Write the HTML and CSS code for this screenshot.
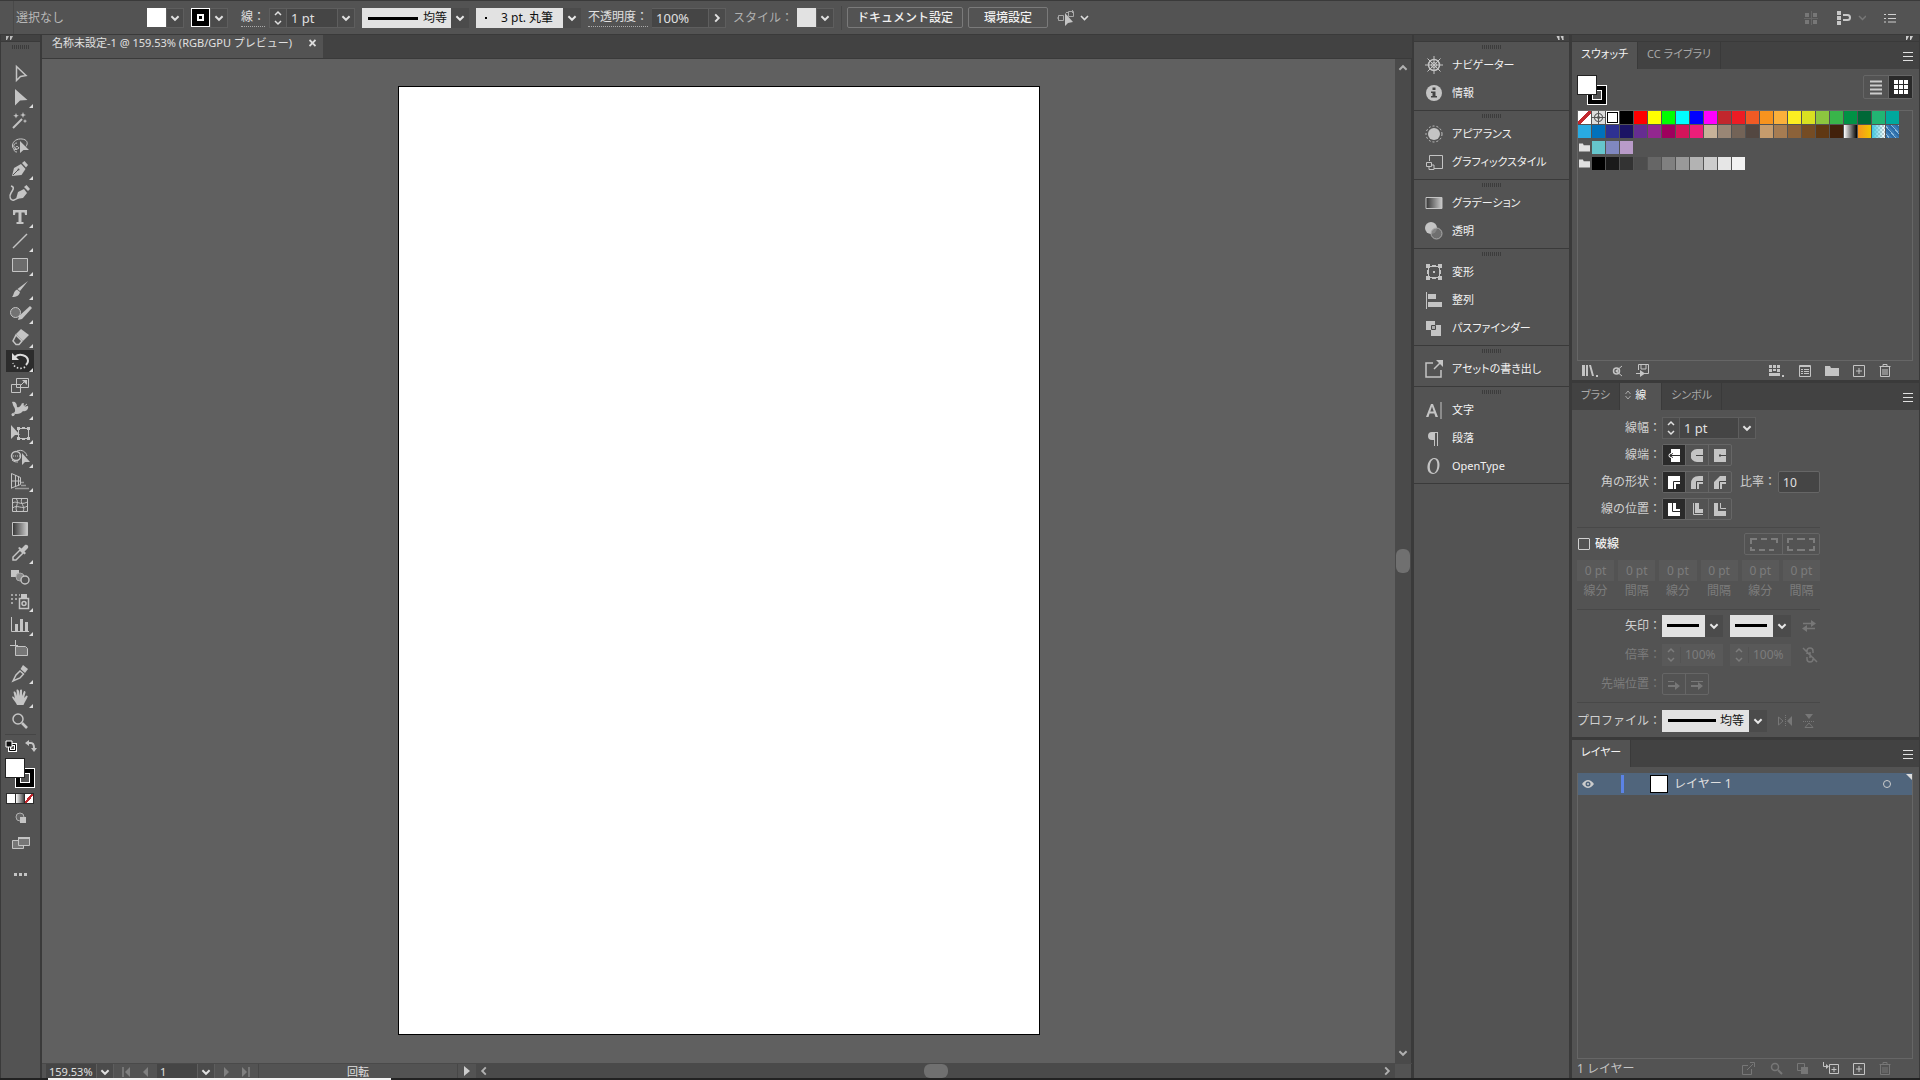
FILE: index.html
```html
<!DOCTYPE html>
<html lang="ja">

<head>
  <meta charset="utf-8">
  <title>名称未設定-1</title>
  <link rel="stylesheet" href="styles.css">
</head>

<body>
  <!-- Shared icons -->
  <svg class="sprite" aria-hidden="true">
    <symbol id="chev" viewBox="0 0 10 10"><path d="M2 3.5l3 3 3-3" fill="none" stroke="currentColor" stroke-width="1.6"/></symbol>
    <symbol id="steps" viewBox="0 0 10 18"><path d="M2 6l3-3 3 3M2 12l3 3 3-3" fill="none" stroke="currentColor" stroke-width="1.5"/></symbol>
    <symbol id="menu" viewBox="0 0 10 10"><path d="M0 1.5h10M0 5.5h10M0 9.5h10" stroke="currentColor" fill="none"/></symbol>
    <symbol id="folder" viewBox="0 0 14 12"><path d="M0 11V1h5l1 2h8v8z" fill="currentColor"/></symbol>
    <symbol id="plus" viewBox="0 0 12 12"><path d="M.5.5h11v11H.5zM6 3v6M3 6h6" fill="none" stroke="currentColor"/></symbol>
    <symbol id="trash" viewBox="0 0 12 13"><path d="M.5 2.5h11M4 2V.5h4V2M1.5 3v9.5h9V3M4 5v6M6 5v6M8 5v6" fill="none" stroke="currentColor"/></symbol>
    <symbol id="swap" viewBox="0 0 14 12"><path d="M1 3.5h9M4 8.5h9" stroke="currentColor" stroke-width="1.4"/><path d="M9 0l5 3.5L9 7zM5 5L0 8.5 5 12z" fill="currentColor"/></symbol>
  </svg>

  <header class="control-bar">
    <span class="bar-grip"></span>
    <span class="selection">選択なし</span>
    <div class="combo">
      <span class="chip chip-fill"></span>
      <button class="drop" aria-label="塗り"><svg><use href="#chev"/></svg></button>
    </div>
    <div class="combo">
      <span class="chip chip-stroke"></span>
      <button class="drop" aria-label="線カラー"><svg><use href="#chev"/></svg></button>
    </div>
    <label class="dotted weight-label" for="weight">線：</label>
    <div class="combo field">
      <button class="drop" aria-label="線幅を増減"><svg class="steps"><use href="#steps"/></svg></button>
      <input id="weight" class="weight" type="text" value="1 pt">
      <button class="drop" aria-label="線幅"><svg><use href="#chev"/></svg></button>
    </div>
    <div class="picker profile-top">
      <select aria-label="可変線幅プロファイル"><option>均等</option></select>
      <svg><use href="#chev"/></svg>
    </div>
    <div class="picker brush-top">
      <select aria-label="ブラシ定義"><option>3 pt. 丸筆</option></select>
      <svg><use href="#chev"/></svg>
    </div>
    <label class="dotted" for="opacity">不透明度：</label>
    <div class="combo field">
      <input id="opacity" class="opacity" type="text" value="100%">
      <button class="drop" aria-label="不透明度"><svg class="turn"><use href="#chev"/></svg></button>
    </div>
    <span class="muted">スタイル：</span>
    <div class="combo">
      <span class="chip chip-style"></span>
      <button class="drop" aria-label="スタイル"><svg><use href="#chev"/></svg></button>
    </div>
    <span class="rule"></span>
    <button class="text-btn">ドキュメント設定</button>
    <button class="text-btn prefs">環境設定</button>
    <button class="icon-btn similar" aria-label="共通オブジェクトを選択">
      <svg width="32" height="18" viewBox="0 0 32 18"><path d="M1.5 6.5h5v5h-5zM11.500 2.500h5v5h-5zM0 9h2M9 3.500h3M15.500 1v3" fill="none" stroke="#a8a8a8"/><path d="M8 4v13l3-3 5-1z" fill="#c4c4c4"/><path d="M24 7l3.500 3.500L31 7" fill="none" stroke="#ddd" stroke-width="1.600"/></svg>
    </button>
    <span class="spacer"></span>
    <button class="icon-btn" aria-label="グリッド" disabled><svg width="14" height="14"><path d="M1 2h4v4H1zM9 2h4v4H9zM1 9h4v4H1zM9 9h4v4H9z" fill="#777"/><path d="M7.500 0v14M0 7.500h14" stroke="#666" /></svg></button>
    <button class="icon-btn snap" aria-label="整列"><svg width="30" height="16"><path d="M1 1h4v4H1zM1 6h4v4H1zM1 11h4v4H1z" fill="#c8c8c8"/><path d="M7 5h4.500a2.500 2.500 0 010 5H7" fill="none" stroke="#c8c8c8" stroke-width="2"/><path d="M23 6l3.500 3.500L30 6" fill="none" stroke="#777" stroke-width="1.500"/></svg></button>
    <button class="icon-btn" aria-label="メニュー"><svg width="12" height="10"><path d="M0 1.500h2M0 5.500h2M0 9h2M4 1.500h8M4 5.500h8M4 9h8" stroke="#d0d0d0"/></svg></button>
  </header>

  <main class="workspace">
    <nav class="tools" aria-label="ツール">
      <div class="strip-head"><svg width="8" height="4"><path d="M0 0h3L1 4H0zM4 0h3L5 4H4z" fill="#bbb"/></svg></div>
      <div class="grip"></div>
      <div class="tool-list">
        <button class="tool" aria-label="選択"><svg viewBox="0 0 30 24"><path class="ln" d="M11.500 5.500v14l4-4 5.500-1z"/></svg></button>
        <button class="tool more" aria-label="ダイレクト選択"><svg viewBox="0 0 30 24"><path d="M10 4v16.500l5-5L22.500 15z"/></svg></button>
        <button class="tool" aria-label="自動選択"><svg viewBox="0 0 30 24"><path d="M8 19L17 10" stroke="#c4c4c4" stroke-width="2"/><path d="M11 4l.8 2 2 .8-2 .8-.8 2-.8-2-2-.8 2-.8zM18 3l.8 2.200 2.200.8-2.200.8L18 9l-.8-2.200L15 6l2.200-.8zM20 10l.6 1.500 1.500.6-1.500.6-.6 1.500-.6-1.500-1.500-.6 1.500-.6z"/></svg></button>
        <button class="tool" aria-label="なげなわ"><svg viewBox="0 0 30 24"><path class="th" d="M12 16.500c-3 .5-5-1.500-4.500-4.500C8 8 12 5.500 17 6s6.500 4 4 7.500M12 10a3 3 0 102 5c-1-2-3-2-3.500-.5M9 16c0 2 1 3 3 3"/><path d="M15 8v12l3.500-3H24z"/></svg></button>
        <button class="tool more" aria-label="ペン"><svg viewBox="0 0 30 24"><path d="M7 19l2-8 7-4 4.500 5-4 6z"/><path d="M17 6l2.500-2 3.500 4-2 2.500z"/><path d="M8 18l5-5" stroke="#535353"/><circle cx="13.500" cy="12.500" r="1" fill="#535353"/></svg></button>
        <button class="tool" aria-label="曲線"><svg viewBox="0 0 30 24"><path d="M11 18l2-7 6-3 3 4-4 5zM19 6l2.500-2 3.500 4-2 2z"/><path class="ln" d="M6 5c4 1 2 4 0 7s-1 8 3 7 5-3 7-5"/></svg></button>
        <button class="tool more" aria-label="文字"><svg viewBox="0 0 30 24"><path d="M8 5h14v5h-2l-.5-2.500h-3V17h2v2h-7v-2h2V7.500h-3L10 10H8z"/></svg></button>
        <button class="tool more" aria-label="直線"><svg viewBox="0 0 30 24"><path class="ln" d="M8 19L22 5"/></svg></button>
        <button class="tool more" aria-label="長方形"><svg viewBox="0 0 30 24"><path d="M7.500 5.500h15v13h-15z" fill="#6c6c6c" stroke="#c4c4c4"/></svg></button>
        <button class="tool more" aria-label="ブラシ"><svg viewBox="0 0 30 24"><path d="M23 4l-8 10-2.500-2zM12 12.500l3 2.500c-.5 3-3 5-8 5 2-2 1.500-6 5-7.500z"/></svg></button>
        <button class="tool more" aria-label="Shaper"><svg viewBox="0 0 30 24"><circle cx="10.500" cy="11.500" r="5" fill="#737373" stroke="#c4c4c4"/><path d="M25 5l2 2-10 11-4 1 1-4z"/></svg></button>
        <button class="tool more" aria-label="消しゴム"><svg viewBox="0 0 30 24"><path d="M16 4l8 6-6 6-7-7z"/><path class="ln" d="M11 10l6 6-3 3.500H11l-3-3.500z"/></svg></button>
        <button class="tool more current" aria-label="回転"><svg viewBox="0 0 30 24"><path d="M10 8c4-4 13-2 13 4 0 2-1 3-2 4" fill="none" stroke="#ddd" stroke-width="2"/><path d="M7 4v7h7z" fill="#ddd"/><path d="M20 18c-4 3-11 1-12-4" fill="none" stroke="#ddd" stroke-width="1.600" stroke-dasharray="1.500 2"/></svg></button>
        <button class="tool more" aria-label="拡大・縮小"><svg viewBox="0 0 30 24"><path class="th" d="M11.500 5.500h12v9h-12zM6.500 11.500h9v8h-9zM16 12l4-4"/><path d="M17 7h5v5z"/></svg></button>
        <button class="tool more" aria-label="線幅"><svg viewBox="0 0 30 24"><path d="M7 5c3-1 5 1 5 5 2 1 4-1 5-4 1 1 2 0 2 0-1 3 0 4 4 3 1 3-2 6-5 5-2 3-7 4-10 2 2 0 3-3 1-6-1-1-1-3-2-5z"/><path class="th" d="M7 19l15-12"/><circle cx="8" cy="17.500" r="1.500"/></svg></button>
        <button class="tool more" aria-label="自由変形"><svg viewBox="0 0 30 24"><path d="M6 4v14l4-4h5z"/><path class="th" d="M13.500 7.500h10v10h-10z"/><path d="M12 6h3v3h-3zM22 6h3v3h-3zM12 16h3v3h-3zM22 16h3v3h-3zM17 6h3v2h-3zM17 17h3v2h-3z"/></svg></button>
        <button class="tool more" aria-label="シェイプ形成"><svg viewBox="0 0 30 24"><circle class="ln" cx="11" cy="11" r="4.500"/><path class="th" d="M12 6c5-2 9 1 10 5M13 17c-2 0-4 0-6-2"/><path d="M8 11h8" stroke="#c4c4c4" stroke-dasharray="1 1"/><path d="M17 8v12l3-3h5z"/></svg></button>
        <button class="tool more" aria-label="遠近グリッド"><svg viewBox="0 0 30 24"><path class="th" d="M6.500 4.500v15M6.500 4.500l9 4v7l-9 3.500M10.500 6v12M13.500 7.500v9M6.500 12h9"/><path d="M16 13.500h3M16 16.500h5M10 19.500h14" stroke="#999" stroke-width="1.500"/></svg></button>
        <button class="tool" aria-label="メッシュ"><svg viewBox="0 0 30 24"><path class="th" d="M7.500 5.500h15v13h-15zM7.500 10c5-3 7 3 15-1M7.500 15c5-4 9 2 15-2M11 5.500c4 4-2 9 1 13M17 5.500c-3 4 4 8 1 13"/></svg></button>
        <button class="tool" aria-label="グラデーション"><svg viewBox="0 0 30 24"><defs><linearGradient id="gr"><stop stop-color="#333"/><stop offset="1" stop-color="#ccc"/></linearGradient></defs><path d="M7.500 5.500h15v13h-15z" fill="url(#gr)" stroke="#c4c4c4"/></svg></button>
        <button class="tool more" aria-label="スポイト"><svg viewBox="0 0 30 24"><path class="ln" d="M15 9l3 3-7 7H8v-3z"/><path d="M13 7l1.500-1 2 1.500L20 4c2-1 4 1 3 3l-3.500 3.500L21 12l-1.500 1.500z"/></svg></button>
        <button class="tool" aria-label="ブレンド"><svg viewBox="0 0 30 24"><path d="M6 5h8v7H6z"/><circle cx="15" cy="12" r="4" fill="#888" stroke="#aaa"/><circle cx="20" cy="15" r="4" fill="#535353" stroke="#c4c4c4" stroke-width="1.400"/></svg></button>
        <button class="tool more" aria-label="シンボルスプレー"><svg viewBox="0 0 30 24"><path class="ln" d="M14.500 9.500h9v10h-9z"/><circle class="ln" cx="19" cy="14.500" r="2"/><path d="M16 5h6v4h-6z"/><path d="M6 5h2v2H6zM10 5h2v2h-2zM14 5h1v2h-1zM6 9h2v2H6zM10 9h2v2h-2zM6 13h2v2H6z" opacity=".7"/></svg></button>
        <button class="tool more" aria-label="棒グラフ"><svg viewBox="0 0 30 24"><path class="th" d="M6.500 4v14.500H24"/><path d="M10 11h3v7h-3zM15 6h3v12h-3zM20 9h3v9h-3z"/></svg></button>
        <button class="tool" aria-label="アートボード"><svg viewBox="0 0 30 24"><path class="th" d="M10.500 3v6M5 8.500h8"/><path d="M10.500 9.500h10l2 2v7h-12z" fill="#777" stroke="#c4c4c4"/></svg></button>
        <button class="tool more" aria-label="スライス"><svg viewBox="0 0 30 24"><path class="ln" d="M15 10l3.500 3L15 17l-7 3 3-6z"/><path d="M15.500 8L18 4l5 4-3 4z"/></svg></button>
        <button class="tool more" aria-label="手のひら"><svg viewBox="0 0 30 24"><path d="M12 20c-1-3-4-5-5-8 1-1 2 0 3 1.500L8.500 7c1-1 2 0 2.500 1l1 3-.5-6c1-1 2 0 2.500 1l.5 5 .5-6c1-1 2-.5 2 .5V11l2-5c1 0 1.500.5 1.500 1.500L19 13l2.500-2.500c1 0 1.500 1 1 1.500-1 3-3 5-4 8z"/></svg></button>
        <button class="tool" aria-label="ズーム"><svg viewBox="0 0 30 24"><circle class="ln" cx="13" cy="10" r="5"/><path d="M17 14l5 5" stroke="#c4c4c4" stroke-width="2.600"/></svg></button>
      </div>
      <div class="mini-row">
        <svg width="12" height="12"><path d="M4.500 4.500h6v6h-6z" fill="none" stroke="#fff" stroke-width="3"/><path d="M4.500 4.500h6v6h-6z" fill="none" stroke="#000"/><path d="M1 1h6v6H1z" fill="#111" stroke="#fff"/></svg>
        <svg width="12" height="12"><path d="M3 3h3q3 0 3 5" fill="none" stroke="#c4c4c4" stroke-width="2"/><path d="M4 0v6L0 3zM6 8h6l-3 4z" fill="#c4c4c4"/></svg>
      </div>
      <div class="fill-stroke"><span class="fs-stroke"></span><span class="fs-fill"></span></div>
      <div class="modes"><span class="solid"></span><span class="grad"></span><span class="none"></span></div>
      <div class="extras">
        <svg width="12" height="12"><circle cx="5" cy="5" r="4" fill="#666" stroke="#b0b0b0"/><path d="M5 5h6v6H5z" fill="#c4c4c4"/></svg>
        <svg width="18" height="14"><path d="M.5 4.500h11v8H.5z" fill="#777" stroke="#c4c4c4"/><path d="M6.500 1.500h11v8h-11z" fill="#777" stroke="#c4c4c4"/><path d="M6 1h12v2H6z" fill="#c4c4c4"/></svg>
        <svg width="14" height="6"><path d="M0 1h3v3H0zM5 1h3v3H5zM10 1h3v3h-3z" fill="#c4c4c4"/></svg>
      </div>
    </nav>

    <section class="document">
      <div class="doc-tabs">
        <div class="doc-tab"><span>名称未設定-1 @ 159.53% (RGB/GPU プレビュー)</span><button class="close" aria-label="閉じる"><svg width="7" height="8"><path d="M.5 1l6 6M6.500 1l-6 6" stroke="#ddd" stroke-width="1.800"/></svg></button></div>
      </div>
      <div class="stage">
        <div class="canvas"><div class="artboard"></div></div>
        <div class="vscroll"><svg class="up"><use href="#chev"/></svg><span class="thumb"></span><svg><use href="#chev"/></svg></div>
      </div>
      <footer class="status">
        <input class="zoom" type="text" value="159.53%" aria-label="ズーム">
        <button class="drop" aria-label="ズームを選択"><svg><use href="#chev"/></svg></button>
        <div class="nav">
          <svg width="10" height="10"><path d="M1 0v10" stroke="#808080" stroke-width="1.500"/><path d="M8 0v10L3 5z" fill="#808080"/></svg>
          <svg width="6" height="10"><path d="M5 0v10L0 5z" fill="#808080"/></svg>
        </div>
        <input class="page" type="text" value="1" aria-label="アートボード">
        <button class="drop" aria-label="アートボードを選択"><svg><use href="#chev"/></svg></button>
        <div class="nav">
          <svg width="6" height="10"><path d="M1 0v10l5-5z" fill="#808080"/></svg>
          <svg width="10" height="10"><path d="M2 0v10l5-5z" fill="#808080"/><path d="M9 0v10" stroke="#808080" stroke-width="1.500"/></svg>
        </div>
        <span class="tool-name">回転</span>
        <button class="play" aria-label="表示"><svg width="6" height="10"><path d="M0 0l6 5-6 5z" fill="#ccc"/></svg></button>
        <div class="hscroll"><svg class="left"><use href="#chev"/></svg><span class="thumb"></span><svg class="turn"><use href="#chev"/></svg></div>
        <span class="corner"></span>
      </footer>
    </section>

    <aside class="dock">
      <div class="strip-head end"><svg width="8" height="4"><path d="M1 0h2v4zM5 0h2v4z" fill="#ccc" stroke="#ccc"/></svg></div>
      <div class="dock-group">
        <button><svg viewBox="0 0 18 18"><circle class="ln" cx="9" cy="9" r="5.500"/><circle class="th" cx="9" cy="9" r="2.500"/><path class="th" d="M9 0v18M0 9h18M2.500 2.500l13 13M15.500 2.500l-13 13"/></svg>ナビゲーター</button>
        <button><svg viewBox="0 0 18 18"><circle cx="9" cy="9" r="8"/><path d="M7.500 3.500h3v2.500h-3zM6 7.500h4.500V12H12v1.500H6V12h1.500V9H6z" fill="#444"/></svg>情報</button>
      </div>
      <div class="dock-group">
        <button><svg viewBox="0 0 18 18"><circle cx="9" cy="9" r="6"/><circle cx="9" cy="9" r="8" fill="none" stroke="#c4c4c4" stroke-dasharray="2 2"/></svg>アピアランス</button>
        <button><svg viewBox="0 0 18 18"><path class="th" d="M4.500 8V2.500h13v13H9M1.500 9.500h5v4h-5zM4 14v2.500h5V12H7"/></svg>グラフィックスタイル</button>
      </div>
      <div class="dock-group">
        <button><svg viewBox="0 0 18 18"><path d="M1 3.500h16v11H1z" fill="url(#gr)" stroke="#c4c4c4"/></svg>グラデーション</button>
        <button><svg viewBox="0 0 18 18"><circle cx="6" cy="6" r="6"/><circle cx="11.500" cy="11.500" r="5.500" fill="#777" fill-opacity=".8" stroke="#aaa"/></svg>透明</button>
      </div>
      <div class="dock-group">
        <button><svg viewBox="0 0 18 18"><path class="th" d="M3.500 3.500h11v11h-11z"/><path d="M1 1h4v4H1zM7 2h4v2H7zM13 1h4v4h-4zM1 13h4v4H1zM7 14h4v2H7zM13 13h4v4h-4zM2 7h2v4H2zM14 7h2v4h-2zM8 8h2v2H8z"/></svg>変形</button>
        <button><svg viewBox="0 0 18 18"><path d="M1 1h1v17H1zM3 3h8v5H3zM3 11h14v5H3z"/></svg>整列</button>
        <button><svg viewBox="0 0 18 18"><path d="M1 2h9v4h6v11H6v-6H1z"/><path d="M6.500 6.500h4v4h-4z" fill="#aaa" stroke="#484848"/></svg>パスファインダー</button>
      </div>
      <div class="dock-group">
        <button><svg viewBox="0 0 18 18"><path class="ln" d="M8 3H1v14h15v-7M9 9l7-7"/><path d="M11 0h7v7z"/></svg>アセットの書き出し</button>
      </div>
      <div class="dock-group">
        <button><svg viewBox="0 0 18 18"><path d="M1 16L6 3h2l5 13h-2.500l-1.200-3.500H4.600L3.500 16zM5.300 10.500h3.400L7 5.500zM15.500 1h1v17h-1z" fill-rule="evenodd"/></svg>文字</button>
        <button><svg viewBox="0 0 18 18"><path d="M13 3H7a4 4 0 000 8h2v6h1V4h2v13h1z"/></svg>段落</button>
        <button><svg viewBox="0 0 18 18"><path d="M9 1c8-1 7 16-1 16S1 2 9 1zm0 1c-5 1-6 14 0 14 4-1 5-14 0-14z" fill-rule="evenodd"/></svg>OpenType</button>
      </div>
    </aside>

    <aside class="panels">
      <div class="strip-head end"><svg width="8" height="4"><path d="M0 0h3L1 4H0zM4 0h3L5 4H4z" fill="#ccc"/></svg></div>

      <section class="panel swatches">
        <div class="tabs"><button class="tab on">スウォッチ</button><button class="tab">CC ライブラリ</button><button class="menu" aria-label="パネルメニュー"><svg><use href="#menu"/></svg></button></div>
        <div class="swatch-top">
          <div class="fill-stroke"><span class="fs-stroke"></span><span class="fs-fill"></span></div>
          <div class="seg view">
            <button aria-label="リスト"><svg width="12" height="15"><path d="M0 1.500h12M0 5.500h12M0 9.500h12M0 13.500h12" stroke="#ccc" stroke-width="2"/></svg></button>
            <button class="on" aria-label="サムネール"><svg width="14" height="14"><path d="M0 0h4v4H0zM5 0h4v4H5zM10 0h4v4h-4zM0 5h4v4H0zM5 5h4v4H5zM10 5h4v4h-4zM0 10h4v4H0zM5 10h4v4H5zM10 10h4v4h-4z" fill="#fff"/></svg></button>
          </div>
        </div>
        <div class="swatch-list" id="swatches"></div>
        <div class="panel-foot">
          <svg width="16" height="13"><path d="M0 1h3v11H0zM4 1h2v11H4zM7 1h2l3 11h-2zM14 11h2v2h-2z"/></svg>
          <svg width="10" height="12"><circle class="ln" cx="4.500" cy="6" r="3"/><path class="th" d="M4 6l6-5M4 6l6 5"/><circle cx="5" cy="6" r="1.500"/></svg>
          <svg width="13" height="13"><path class="th" d="M2.500 6V.5h10v9H8M5 1v4h5V1M0 9.500h6"/><path d="M4 6l5 3.500L4 13z"/></svg>
          <span class="spacer"></span>
          <svg width="16" height="13"><path d="M0 1h3v3H0zM4 1h3v3H4zM8 1h3v3H8zM0 5h3v3H0zM8 5h3v3H8zM0 9h11v3H0zM4 5h3v2H4zM13 11h2v2h-2z"/></svg>
          <svg width="12" height="12"><path class="th" d="M.5.5h11v11H.5zM5 4.500h5M5 6.500h5M5 8.500h5M2 4.500h2M2 6.500h2M2 8.500h2M.5 1.500h11"/></svg>
          <svg width="14" height="12"><use href="#folder"/></svg>
          <svg width="12" height="12"><use href="#plus"/></svg>
          <svg width="12" height="13"><use href="#trash"/></svg>
        </div>
      </section>

      <section class="panel stroke">
        <div class="tabs"><button class="tab">ブラシ</button><button class="tab on"><svg width="6" height="10"><path d="M.5 4L3 1l2.500 3M.5 6L3 9l2.500-3" fill="none" stroke="#aaa"/></svg>線</button><button class="tab">シンボル</button><button class="menu" aria-label="パネルメニュー"><svg><use href="#menu"/></svg></button></div>
        <div class="stroke-body">
          <div class="row">
            <label for="stroke-width">線幅：</label>
            <div class="combo field">
              <button class="drop" aria-label="増減"><svg class="steps"><use href="#steps"/></svg></button>
              <input id="stroke-width" class="wide" type="text" value="1 pt">
              <button class="drop" aria-label="線幅を選択"><svg><use href="#chev"/></svg></button>
            </div>
          </div>
          <div class="row">
            <span class="label">線端：</span>
            <div class="seg">
              <button class="on" aria-label="線端なし"><svg width="12" height="13"><path d="M3 0h9v13H3V9h2V4H3z"/><circle cx="3" cy="6.500" r="2" fill="#2a2a2a" stroke="#fff"/><path d="M4 6.500h8" stroke="#2a2a2a"/></svg></button>
              <button aria-label="丸型線端"><svg width="12" height="13"><path d="M12 0v13H6A6.500 6.500 0 016 0z"/><path d="M5 6.500h7" stroke="#444"/></svg></button>
              <button aria-label="突出線端"><svg width="12" height="13"><path d="M0 0h12v13H0z"/><path d="M5 6.500h7M6 5v3" stroke="#444"/></svg></button>
            </div>
          </div>
          <div class="row">
            <span class="label">角の形状：</span>
            <div class="seg">
              <button class="on" aria-label="マイター結合"><svg width="12" height="13"><path d="M0 0h12v8H8v5H0z"/><path d="M12 5.500H5.500V13" fill="none" stroke="#2a2a2a"/></svg></button>
              <button aria-label="ラウンド結合"><svg width="12" height="13"><path d="M12 0v8H8v5H0V8q0-8 8-8z"/><path d="M12 5.500H5.500V13" fill="none" stroke="#444"/></svg></button>
              <button aria-label="ベベル結合"><svg width="12" height="13"><path d="M12 0v8H8v5H0V6l6-6z"/><path d="M12 5.500H5.500V13" fill="none" stroke="#444"/></svg></button>
            </div>
            <label class="ratio-label" for="ratio">比率：</label>
            <input id="ratio" class="ratio" type="text" value="10">
          </div>
          <div class="row">
            <span class="label">線の位置：</span>
            <div class="seg">
              <button class="on" aria-label="中央"><svg width="12" height="13"><path d="M0 0h8v6h4v7H0z"/><path d="M4.500 0v8.500H12" fill="none" stroke="#2a2a2a"/></svg></button>
              <button aria-label="内側"><svg width="12" height="13"><path d="M4 0h4v6h4v4H4z"/><path class="th" d="M2.500 0v11.500H12"/></svg></button>
              <button aria-label="外側"><svg width="12" height="13"><path d="M0 0h4v8h8v5H0z"/><path class="th" d="M6.500 0v5.500H12"/></svg></button>
            </div>
          </div>
          <hr>
          <div class="row dash-row">
            <label class="check" for="dash"><input id="dash" type="checkbox">破線</label>
            <div class="seg dash-seg">
              <button aria-label="正確な長さ" disabled><svg width="28" height="13"><path d="M1 6V1H7M11 1h6M21 1h6V5M1 9v3H5M9 12h6M19 12h5" /></svg></button>
              <button aria-label="角に整列" disabled><svg width="28" height="13"><path d="M1 5V1H6M10 1h8M22 1h5V5M1 8v4H6M10 12h8M22 12h5V8"/></svg></button>
            </div>
          </div>
          <div class="dashes">
            <label><input type="text" value="0 pt" disabled>線分</label>
            <label><input type="text" value="0 pt" disabled>間隔</label>
            <label><input type="text" value="0 pt" disabled>線分</label>
            <label><input type="text" value="0 pt" disabled>間隔</label>
            <label><input type="text" value="0 pt" disabled>線分</label>
            <label><input type="text" value="0 pt" disabled>間隔</label>
          </div>
          <hr>
          <div class="row arrow-row">
            <span class="label">矢印：</span>
            <div class="picker arrow"><select aria-label="始点の矢印"><option></option></select><svg><use href="#chev"/></svg></div>
            <div class="picker arrow"><select aria-label="終点の矢印"><option></option></select><svg><use href="#chev"/></svg></div>
            <svg class="dim" width="14" height="12"><use href="#swap"/></svg>
          </div>
          <div class="row arrow-row off">
            <span class="label">倍率：</span>
            <div class="combo scale"><svg class="steps"><use href="#steps"/></svg><input type="text" value="100%" aria-label="始点の倍率" disabled></div>
            <div class="combo scale"><svg class="steps"><use href="#steps"/></svg><input type="text" value="100%" aria-label="終点の倍率" disabled></div>
            <svg class="dim" width="16" height="16"><path d="M5 7V4a3 3 0 016 0v2M5 10v2a3 3 0 006 0v-2M8 5v6M1 1l14 14" fill="none" stroke="currentColor" stroke-width="1.500"/></svg>
          </div>
          <div class="row off">
            <span class="label">先端位置：</span>
            <div class="seg">
              <button aria-label="パスの終点から" disabled><svg width="12" height="12"><path d="M0 3h6v1H0zM0 7h8v2H0zM7 4l5 4-5 4z"/></svg></button>
              <button aria-label="パスの終点に" disabled><svg width="12" height="12"><path d="M0 3h12v1H0zM0 7h8v2H0zM7 4l5 4-5 4z"/></svg></button>
            </div>
          </div>
          <hr>
          <div class="row profile-row">
            <span class="label">プロファイル：</span>
            <div class="picker profile"><select aria-label="プロファイル"><option>均等</option></select><svg><use href="#chev"/></svg></div>
            <svg class="dim" width="14" height="12"><path d="M.5 2v8L5 6z" fill="none" stroke="currentColor"/><path d="M14 1v10L9 6z" fill="currentColor"/><path d="M7.500 0v12" stroke="currentColor" stroke-dasharray="1 1"/></svg>
            <svg class="dim" width="12" height="14"><path d="M2 0h8L6 5z" fill="currentColor"/><path d="M2 13.500h8L6 9z" fill="none" stroke="currentColor"/><path d="M0 7.500h12" stroke="currentColor" stroke-dasharray="1 1"/></svg>
          </div>
        </div>
      </section>

      <section class="panel layers">
        <div class="tabs"><button class="tab on">レイヤー</button><button class="menu" aria-label="パネルメニュー"><svg><use href="#menu"/></svg></button></div>
        <div class="layer-list">
          <div class="layer">
            <svg width="12" height="8"><path d="M0 4q6-8 12 0-6 8-12 0z" fill="#ccc"/><circle cx="6" cy="4" r="2.500" fill="#50657c"/><circle cx="6" cy="4" r="1" fill="#ccc"/></svg>
            <span class="layer-color"></span>
            <span class="layer-thumb"></span>
            <span class="layer-name">レイヤー 1</span>
            <svg width="10" height="10"><circle cx="5" cy="5" r="3.500" fill="none" stroke="#ccc"/></svg>
            <span class="layer-mark"></span>
          </div>
        </div>
        <div class="panel-foot">
          <span class="count">1 レイヤー</span>
          <span class="spacer"></span>
          <svg class="dim" width="14" height="13"><path d="M6 3.500H.5v9h9V7M5 8l6-6M8 .5h4.500V5" fill="none" stroke="currentColor"/></svg>
          <svg class="dim" width="13" height="13"><circle cx="5" cy="5" r="3.500" fill="none" stroke="currentColor" stroke-width="1.500"/><path d="M8 8l4 4" stroke="currentColor" stroke-width="2"/></svg>
          <svg class="dim" width="12" height="12"><path d="M.5.5h7v7h-7z" fill="none" stroke="currentColor"/><path d="M4 4h7v7H4z" fill="currentColor"/></svg>
          <svg width="16" height="13"><path class="th" d="M.5 0v4.500H4M6.500 2.500h9v9h-9zM11 5v5M8.500 7.500h5"/><path d="M3 2l3 2.500L3 7z"/></svg>
          <svg width="12" height="12"><use href="#plus"/></svg>
          <svg class="dim" width="12" height="13"><use href="#trash"/></svg>
        </div>
      </section>
    </aside>
  </main>

  <div class="taskbar"><span></span></div>
  <script src="script.js"></script>
</body>

</html>
```
FILE: styles.css
```css
:root {
  --bg: #535353;
  --canvas: #606060;
  --dark: #424242;
  --line: #3a3a3a;
  --input: #454545;
  --edge: #666;
  --text: #e0e0e0;
  --icon: #c4c4c4;
  --paper: #e2e2e2;
}

* {
  box-sizing: border-box;
}

body {
  margin: 0;
  height: 100vh;
  display: flex;
  flex-direction: column;
  overflow: hidden;
  background: var(--bg);
  color: var(--text);
  font: 12px/16px "Noto Sans", "Noto Sans CJK JP", sans-serif;
}

button,
input,
select {
  margin: 0;
  padding: 0;
  border: 0;
  border-radius: 0;
  background: none;
  color: inherit;
  font: inherit;
}

button {
  display: flex;
  align-items: center;
  justify-content: center;
}

svg {
  display: block;
  flex: none;
  width: auto;
  fill: var(--icon);
}

.sprite {
  position: absolute;
  width: 0;
  height: 0;
}

.ln,
.th {
  fill: none;
  stroke: var(--icon);
  stroke-width: 1.5;
}

.th {
  stroke-width: 1;
}

.spacer {
  flex: 1;
}

/* Control bar */
.control-bar {
  display: flex;
  align-items: center;
  flex: none;
  height: 35px;
  padding-right: 24px;
  border-top: 1px solid var(--line);
  border-bottom: 1px solid var(--line);
}

.bar-grip {
  align-self: stretch;
  width: 14px;
  border-right: 1px solid #494949;
}

.selection {
  width: 133px;
  padding-left: 2px;
  color: #b8b8b8;
}

.combo {
  display: flex;
  align-items: center;
  margin-right: 7px;
}

.chip {
  width: 19px;
  height: 19px;
  background: #fff;
}

.chip-stroke {
  border: 1px solid #fff;
  background: linear-gradient(#000, #000) center / 3px 3px no-repeat, linear-gradient(#fff, #fff) center / 7px 7px no-repeat, #000;
}

.chip-style {
  background: var(--paper);
}

.drop {
  flex: none;
  width: 18px;
  height: 20px;
  border: 1px solid #5e5e5e;
  background: #4b4b4b;
}

.drop svg,
.picker > svg {
  width: 12px;
  height: 12px;
}

.drop .steps {
  width: 10px;
  height: 18px;
}

.turn {
  transform: rotate(-90deg);
}

.field input {
  height: 20px;
  padding-left: 4px;
  background: var(--input);
  border: 1px solid #5e5e5e;
  border-width: 1px 0;
  font-size: 13px;
}

.weight {
  width: 50px;
}

.opacity {
  width: 56px;
}

.dotted {
  margin-right: 4px;
  line-height: 18px;
  border-bottom: 1px dotted #aaa;
}

.weight-label {
  margin-left: 6px;
}

.muted {
  margin-right: 4px;
  color: #b0b0b0;
}

.picker {
  position: relative;
  height: 20px;
  margin-right: 7px;
}

.picker select {
  width: 100%;
  height: 100%;
  appearance: none;
  color: #111;
  background: linear-gradient(#000, #000) 6px 9px / 50px 3px no-repeat,
    linear-gradient(#4b4b4b, #4b4b4b) right / 18px 100% no-repeat, var(--paper);
}

.picker > svg {
  position: absolute;
  right: 3px;
  top: 50%;
  margin-top: -6px;
  color: #e8e8e8;
  pointer-events: none;
}

.profile-top {
  width: 107px;
}

.profile-top select {
  padding-left: 61px;
}

.brush-top {
  width: 105px;
}

.brush-top select {
  padding-left: 25px;
  background-position: 9px 9px, right;
  background-size: 2px 2px, 18px 100%;
}

.rule {
  width: 1px;
  height: 24px;
  margin-right: 5px;
  background: #474747;
}

.text-btn {
  width: 116px;
  height: 21px;
  margin-right: 5px;
  border: 1px solid #7a7a7a;
  border-radius: 2px;
  color: #f0f0f0;
  font-weight: 500;
}

.prefs {
  width: 80px;
}

.icon-btn {
  margin-right: 18px;
}

.similar {
  margin-left: 4px;
}

.icon-btn:last-child {
  margin-right: 0;
}

/* Workspace */
.workspace {
  flex: 1;
  min-height: 0;
  display: grid;
  grid-template-columns: 42px minmax(0, 1fr) 160px 348px;
}

.strip-head {
  height: 7px;
  padding: 1px 5px;
  background: var(--dark);
  border-bottom: 1px solid var(--line);
}

.strip-head.end {
  display: flex;
  justify-content: flex-end;
}

.grip {
  width: 18px;
  height: 4px;
  margin: 3px auto 12px;
  background: repeating-linear-gradient(90deg, #3c3c3c 0 1px, var(--bg) 1px 2px);
}

/* Tool bar */
.tools {
  border-left: 1px solid var(--line);
  border-right: 2px solid var(--line);
}

.tool-list {
  padding-bottom: 1px;
  margin: 0 4px;
  border-bottom: 1px solid #464646;
}

.tool {
  position: relative;
  width: 30px;
  height: 24px;
}

.tool svg {
  width: 30px;
  height: 24px;
}

.current {
  background: linear-gradient(#2c2c2c, #2c2c2c) center / 28px 22px no-repeat;
}

.more::after {
  content: "";
  position: absolute;
  right: 2px;
  bottom: 1px;
  border: 2px solid;
  border-color: transparent #ddd #ddd transparent;
}

.mini-row {
  display: flex;
  justify-content: space-between;
  padding: 5px 3px 6px 4px;
}

.fill-stroke {
  display: grid;
  width: 30px;
  height: 30px;
  margin-left: 4px;
}

.fs-fill,
.fs-stroke {
  grid-area: 1 / 1;
  width: 20px;
  height: 20px;
  border: 1px solid #222;
  background: #fff;
}

.fs-stroke {
  place-self: end;
  border: 1px solid #fff;
  background: var(--bg);
  box-shadow: inset 0 0 0 4px #000, inset 0 0 0 5px #fff;
}

.modes {
  display: grid;
  grid-template-columns: repeat(3, 8px);
  gap: 1px;
  width: 28px;
  margin: 5px 0 0 5px;
  border: 1px solid #2c2c2c;
  background: #2c2c2c;
}

.modes span {
  height: 9px;
  background: #fff;
}

.modes .grad {
  background: linear-gradient(90deg, #fff, #444);
}

.modes .none {
  background: linear-gradient(to bottom right, #fff 40%, #c1272d 40% 60%, #fff 60%);
}

.extras {
  display: flex;
  flex-direction: column;
  align-items: center;
  gap: 12px;
  padding-top: 8px;
}

.extras svg:last-child {
  margin-top: 10px;
}

/* Document */
.document {
  min-width: 0;
  display: flex;
  flex-direction: column;
}

.doc-tabs {
  display: flex;
  flex: none;
  height: 24px;
  background: var(--dark);
  border-bottom: 1px solid var(--line);
}

.doc-tab {
  display: flex;
  align-items: center;
  gap: 17px;
  padding: 0 7px 7px 10px;
  background: var(--bg);
  font-size: 11px;
}

.stage {
  flex: 1;
  min-height: 0;
  display: flex;
}

.canvas {
  flex: 1;
  display: flex;
  justify-content: center;
  padding: 27px 0 28px;
  background: var(--canvas);
}

.artboard {
  height: 100%;
  aspect-ratio: 642 / 949;
  background: #fff;
  border: 1px solid #000;
}

.vscroll,
.hscroll {
  display: flex;
  justify-content: space-between;
  align-items: center;
  background: #4a4a4a;
  color: #b0b0b0;
}

.vscroll {
  flex: none;
  flex-direction: column;
  width: 17px;
  padding: 3px 0 4px;
  border-right: 1px solid var(--line);
}

.vscroll svg,
.hscroll svg {
  width: 12px;
  height: 12px;
}

.up {
  transform: rotate(180deg);
}

.left {
  transform: rotate(90deg);
}

.thumb {
  width: 14px;
  height: 24px;
  border-radius: 6px;
  background: #707070;
}

.status {
  display: flex;
  flex: none;
  height: 15px;
  padding-left: 4px;
  overflow: hidden;
  border-top: 1px solid #4a4a4a;
}

.status input {
  height: 16px;
  padding-left: 3px;
  background: var(--input);
  font-size: 11px;
}

.status .drop {
  height: 15px;
  border-width: 0 1px;
}

.zoom {
  width: 50px;
}

.page {
  width: 40px;
}

.nav {
  display: flex;
  justify-content: center;
  gap: 11px;
  width: 43px;
  padding-top: 3px;
}

.tool-name {
  width: 200px;
  text-align: center;
  font-size: 11px;
  border: 1px solid #474747;
  border-width: 0 1px;
}

.play {
  width: 18px;
}

.hscroll {
  flex: 1;
  padding: 0 2px;
}

.hscroll .thumb {
  width: 24px;
  height: 14px;
}

.corner {
  width: 17px;
  border-right: 1px solid var(--line);
}

/* Collapsed dock */
.dock {
  border: 2px solid var(--line);
  border-width: 0 3px 0 2px;
}

.dock-group {
  padding: 9px 0 3px;
  border-bottom: 1px solid var(--line);
  background: repeating-linear-gradient(90deg, #3c3c3c 0 1px, var(--bg) 1px 2px) center 3px / 20px 4px no-repeat;
}

.dock-group button {
  width: 100%;
  height: 28px;
  gap: 9px;
  padding-left: 11px;
  justify-content: flex-start;
  color: #f2f2f2;
  white-space: nowrap;
  font-size: 11px;
  font-feature-settings: "palt";
}

.dock-group svg {
  width: 18px;
  height: 18px;
}

/* Panels */
.panels {
  display: flex;
  flex-direction: column;
  min-height: 0;
  border-right: 1px solid var(--line);
}

.panel + .panel {
  border-top: 3px solid var(--line);
}

.tabs {
  display: flex;
  height: 27px;
  background: var(--dark);
}

.tab {
  gap: 4px;
  padding: 0 9px 4px;
  border-right: 1px solid var(--line);
  color: #a8a8a8;
  font-size: 11px;
  font-feature-settings: "palt";
}

.tab.on {
  background: var(--bg);
  color: #f2f2f2;
}

.stroke .tab.on {
  padding: 0 15px 4px 5px;
}

.menu {
  margin-left: auto;
  padding-right: 6px;
}

.menu svg {
  width: 10px;
  height: 10px;
}

.swatch-top {
  display: flex;
  justify-content: space-between;
  padding: 6px 6px 5px 1px;
}

.seg {
  display: flex;
  border: 1px solid var(--edge);
  border-radius: 2px;
}

.seg button {
  width: 22px;
  height: 20px;
}

.seg button + button {
  width: 23px;
  border-left: 1px solid var(--edge);
}

.seg .on {
  background: #2a2a2a;
}

.seg .on svg {
  fill: #fff;
}

.view {
  align-self: flex-start;
}

.view button,
.view button + button {
  width: 24px;
  height: 22px;
}

.swatch-list {
  height: 251px;
  margin: 0 6px 0 5px;
  border: 1px solid var(--edge);
}

.swatch-row {
  display: flex;
  gap: 1px;
  margin-bottom: 1px;
}

.swatch-row.folder {
  margin: 3px 0;
}

.swatch-row svg,
.swatch {
  width: 13px;
  height: 13px;
}

.swatch-row svg {
  padding: 1px;
}

.swatch.no-paint {
  background: linear-gradient(to bottom right, #fff 42%, #c1272d 42% 58%, #fff 58%);
}

.swatch.registration {
  background: linear-gradient(#555, #555) center / 1px 100% no-repeat, linear-gradient(#555, #555) center / 100% 1px no-repeat,
    radial-gradient(circle, #555 0 1px, #ddd 2px 3px, #555 4px, #ddd 5px);
}

.swatch.white {
  background: #fff;
  border: 1px solid #fff;
  box-shadow: inset 0 0 0 1px #000;
}

.swatch.fade {
  background: linear-gradient(90deg, #fff, #000);
}

.swatch.sun {
  background: linear-gradient(90deg, #f7941d, #f2c500);
}

.swatch.sky {
  background: linear-gradient(90deg, #3fc8e0, transparent), repeating-conic-gradient(#ccc 0 25%, #fff 0 50%) 0 0 / 4px 4px;
}

.swatch.pattern {
  background: repeating-linear-gradient(50deg, #2b6ca8 0 2px, #8ab8dc 2px 3px, #3b7bb5 3px 5px);
}

.panel-foot {
  display: flex;
  align-items: center;
  gap: 14px;
  height: 19px;
  padding: 0 28px 0 10px;
  color: var(--icon);
}

.dim {
  color: #777;
}

/* Stroke panel */
.stroke-body {
  padding: 7px 99px 5px 5px;
  font-size: 12px;
}

.row {
  display: flex;
  align-items: center;
  height: 22px;
  margin-bottom: 5px;
}

.row > label:first-child,
.row > .label {
  width: 84px;
  margin-right: 1px;
  text-align: right;
  white-space: nowrap;
  color: #d0d0d0;
}

.stroke-body .field .drop,
.stroke-body .field input {
  height: 22px;
}

.wide {
  width: 58px;
}

.row .ratio-label {
  margin: 0 2px 0 8px;
  white-space: nowrap;
  color: #d0d0d0;
}

.ratio {
  flex: none;
  width: 42px;
  height: 22px;
  padding-left: 4px;
  border: 1px solid var(--edge);
  border-radius: 2px;
  background: var(--input);
}

hr {
  height: 1px;
  margin: 7px 0 5px;
  border: 0;
  background: #484848;
}

.row .check.check {
  display: flex;
  align-items: center;
  gap: 5px;
  color: #f0f0f0;
  font-weight: 500;
}

.check input {
  appearance: none;
  width: 12px;
  height: 12px;
  margin-left: 1px;
  border: 1px solid #d0d0d0;
  border-radius: 1px;
}

.dash-row {
  justify-content: space-between;
}

.dash-seg button,
.dash-seg button + button {
  width: 37px;
}

.dash-seg path {
  fill: none;
  stroke: #7c7c7c;
  stroke-width: 2;
}

.dashes {
  display: grid;
  grid-template-columns: repeat(6, 1fr);
  gap: 4px;
  padding-bottom: 2px;
  color: #7c7c7c;
  text-align: center;
}

.dashes label {
  line-height: 19px;
}

.dashes input {
  display: block;
  width: 100%;
  height: 21px;
  background: #595959;
  text-align: center;
}

.arrow-row {
  margin-bottom: 7px;
}

.row .picker {
  height: 22px;
}

.arrow {
  width: 61px;
}

.arrow select {
  background-position: 5px 9px, right;
  background-size: 32px 3px, 18px 100%;
}

.row > .dim {
  margin-left: 4px;
}

.off,
.row.off > .label {
  color: #7c7c7c;
}

.scale {
  width: 61px;
  height: 22px;
  background: #595959;
}

.scale svg {
  width: 18px;
  height: 18px;
}

.scale input {
  width: 43px;
  padding-left: 4px;
  border-left: 1px solid #535353;
}

.off .seg svg {
  fill: #777;
}

.profile {
  width: 105px;
}

.profile select {
  padding-left: 58px;
  background-size: 48px 3px, 18px 100%;
}

.profile-row {
  margin: 7px 0 0;
}

.profile-row > .dim + .dim {
  margin-left: 11px;
}

/* Layers */
.layers {
  flex: 1;
  min-height: 0;
  display: flex;
  flex-direction: column;
}

.layer-list {
  flex: 1;
  margin: 6px 6px 0 5px;
  border: 1px solid var(--edge);
  border-top: 0;
}

.layer {
  display: flex;
  align-items: center;
  height: 22px;
  padding-left: 4px;
  background: #50657c;
}

.layer-color {
  width: 3px;
  height: 18px;
  margin: 0 26px 0 27px;
  background: #5b83e6;
}

.layer-thumb {
  width: 18px;
  height: 18px;
  margin-right: 6px;
  background: #fff;
  border: 1px solid #000;
}

.layer-name {
  flex: 1;
}

.layer-mark {
  align-self: flex-start;
  margin: 1px 0 0 14px;
  border: 3px solid;
  border-color: #ddd #ddd transparent transparent;
}

.layers .panel-foot {
  padding-left: 5px;
}

/* Edge of the system task bar */
.taskbar {
  flex: none;
  height: 2px;
  padding-left: 48px;
  background: #222;
}

.taskbar span {
  display: block;
  width: 343px;
  height: 2px;
  background: #f4f4f4;
}
```
FILE: script.js
```js
const rows = [
  ['no-paint', 'registration', 'white', '#000000', '#ff0000', '#ffff00', '#00ff00', '#00ffff', '#0000ff', '#ff00ff', '#c1272d', '#ed1c24', '#f15a24', '#f7931e', '#fbb03b', '#fcee21', '#d9e021', '#8cc63f', '#39b54a', '#009245', '#006837', '#22b573', '#00a99d'],
  ['#29abe2', '#0071bc', '#2e3192', '#1b1464', '#662d91', '#93278f', '#9e005d', '#d4145a', '#ed1e79', '#c7b299', '#998675', '#736357', '#534741', '#c69c6d', '#a67c52', '#8c6239', '#754c24', '#603813', '#42210b', 'fade', 'sun', 'sky', 'pattern'],
];
const groups = [
  ['#66c5cc', '#8088c0', '#b99bc9'],
  ['#000000', '#1a1a1a', '#333333', '#4d4d4d', '#666666', '#808080', '#999999', '#b3b3b3', '#cccccc', '#e6e6e6', '#f2f2f2'],
];

const list = document.getElementById('swatches');

function addRow(colors, folder) {
  const row = document.createElement('div');
  row.className = folder ? 'swatch-row folder' : 'swatch-row';
  if (folder) {
    row.innerHTML = '<svg><use href="#folder"/></svg>';
  }
  colors.forEach((color) => {
    const swatch = document.createElement('button');
    swatch.className = 'swatch';
    swatch.setAttribute('aria-label', color);
    if (color[0] === '#') {
      swatch.style.backgroundColor = color;
    } else {
      swatch.classList.add(color);
    }
    row.append(swatch);
  });
  list.append(row);
}

rows.forEach((colors) => addRow(colors, false));
groups.forEach((colors) => addRow(colors, true));
```
